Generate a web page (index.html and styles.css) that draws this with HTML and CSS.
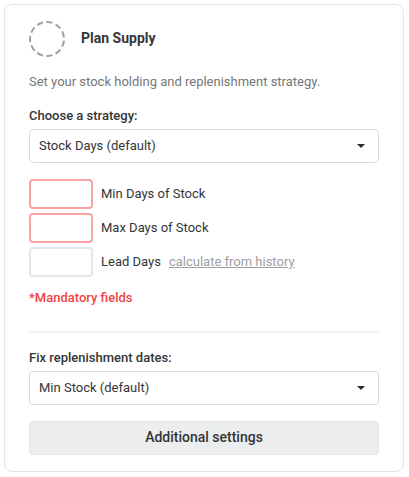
FILE: index.html
```html
<!DOCTYPE html>
<html lang="en">
<head>
<meta charset="utf-8">
<meta name="viewport" content="width=device-width, initial-scale=1">
<title>Plan Supply</title>
<link rel="stylesheet" href="styles.css">
</head>
<body>
<form class="card">
  <header class="card-header">
    <svg class="status-ring" viewBox="0 0 36 36" aria-hidden="true"><circle cx="18" cy="18" r="17" pathLength="110" stroke-dasharray="6.4 3.6" stroke-dashoffset="-1.8"/></svg>
    <h1 class="card-title">Plan Supply</h1>
  </header>
  <p class="intro">Set your stock holding and replenishment strategy.</p>

  <div class="group">
    <label class="group-label" for="strategy">Choose a strategy:</label>
    <div class="select-wrap">
      <select class="select" id="strategy"><option>Stock Days (default)</option></select>
      <svg class="caret" viewBox="0 0 8 4" aria-hidden="true"><path d="M0 0h8L4 4z"/></svg>
    </div>
  </div>

  <div class="fields">
    <div class="field">
      <input class="input input-required" id="min-days" type="text" required>
      <label for="min-days">Min Days of Stock</label>
    </div>
    <div class="field">
      <input class="input input-required" id="max-days" type="text" required>
      <label for="max-days">Max Days of Stock</label>
    </div>
    <div class="field">
      <input class="input" id="lead-days" type="text">
      <label for="lead-days">Lead Days</label>
      <a class="link" href="#">calculate from history</a>
    </div>
  </div>
  <p class="mandatory">*Mandatory fields</p>

  <hr class="divider">

  <div class="group">
    <label class="group-label" for="dates">Fix replenishment dates:</label>
    <div class="select-wrap">
      <select class="select" id="dates"><option>Min Stock (default)</option></select>
      <svg class="caret" viewBox="0 0 8 4" aria-hidden="true"><path d="M0 0h8L4 4z"/></svg>
    </div>
  </div>

  <button class="button" type="button">Additional settings</button>
</form>
</body>
</html>
```
FILE: styles.css
```css
* {
  box-sizing: border-box;
}

body {
  margin: 0;
  padding: 4px 5px 4px 4px;
  background: #fff;
  color: #343536;
  font: 13px/18px Roboto, "Liberation Sans", sans-serif;
}

.card {
  padding: 16px 24px;
  border: 1px solid #e4e5e8;
  border-radius: 8px;
}

.card-header {
  display: flex;
  align-items: center;
  gap: 16px;
}

.status-ring {
  width: 36px;
  height: 36px;
  fill: none;
  stroke: #a0a0a0;
  stroke-width: 2;
}

.card-title {
  margin: 0;
  padding-bottom: 2px;
  font-size: 14px;
  font-weight: 700;
}

.intro {
  margin: 16px 0;
  color: #757779;
}

.group {
  display: flex;
  flex-direction: column;
  gap: 4px;
  margin-bottom: 16px;
}

.group-label {
  font-weight: 500;
}

.select-wrap {
  position: relative;
}

.select {
  display: block;
  width: 100%;
  height: 34px;
  padding: 0 32px 0 9px;
  border: 1px solid #d9dbdd;
  border-radius: 4px;
  appearance: none;
  background: #fff;
  color: inherit;
  font: inherit;
}

.caret {
  position: absolute;
  top: 15px;
  right: 14px;
  width: 8px;
  height: 4px;
  fill: #2b2d2f;
  pointer-events: none;
}

.fields {
  display: flex;
  flex-direction: column;
  gap: 4px;
}

.field {
  display: flex;
  align-items: center;
  gap: 8px;
}

.input {
  width: 64px;
  height: 30px;
  padding: 0 8px;
  border: 2px solid #e5e6eb;
  border-radius: 4px;
  background: #fff;
  color: inherit;
  font: inherit;
}

.input-required {
  border-color: #fba3a3;
}

.link {
  color: #a0a0a0;
  text-decoration: underline;
}

.mandatory {
  margin: 12px 0 24px;
  color: #ee4444;
  font-weight: 500;
}

.divider {
  height: 2px;
  margin: 0 0 16px;
  border: 0;
  background: #f3f3f4;
}

.button {
  display: block;
  width: 100%;
  height: 34px;
  padding: 0 8px 2px;
  border: 1px solid #e4e6e8;
  border-radius: 4px;
  background: #ebedee;
  color: inherit;
  font: 500 14px/18px Roboto, "Liberation Sans", sans-serif;
}
```
